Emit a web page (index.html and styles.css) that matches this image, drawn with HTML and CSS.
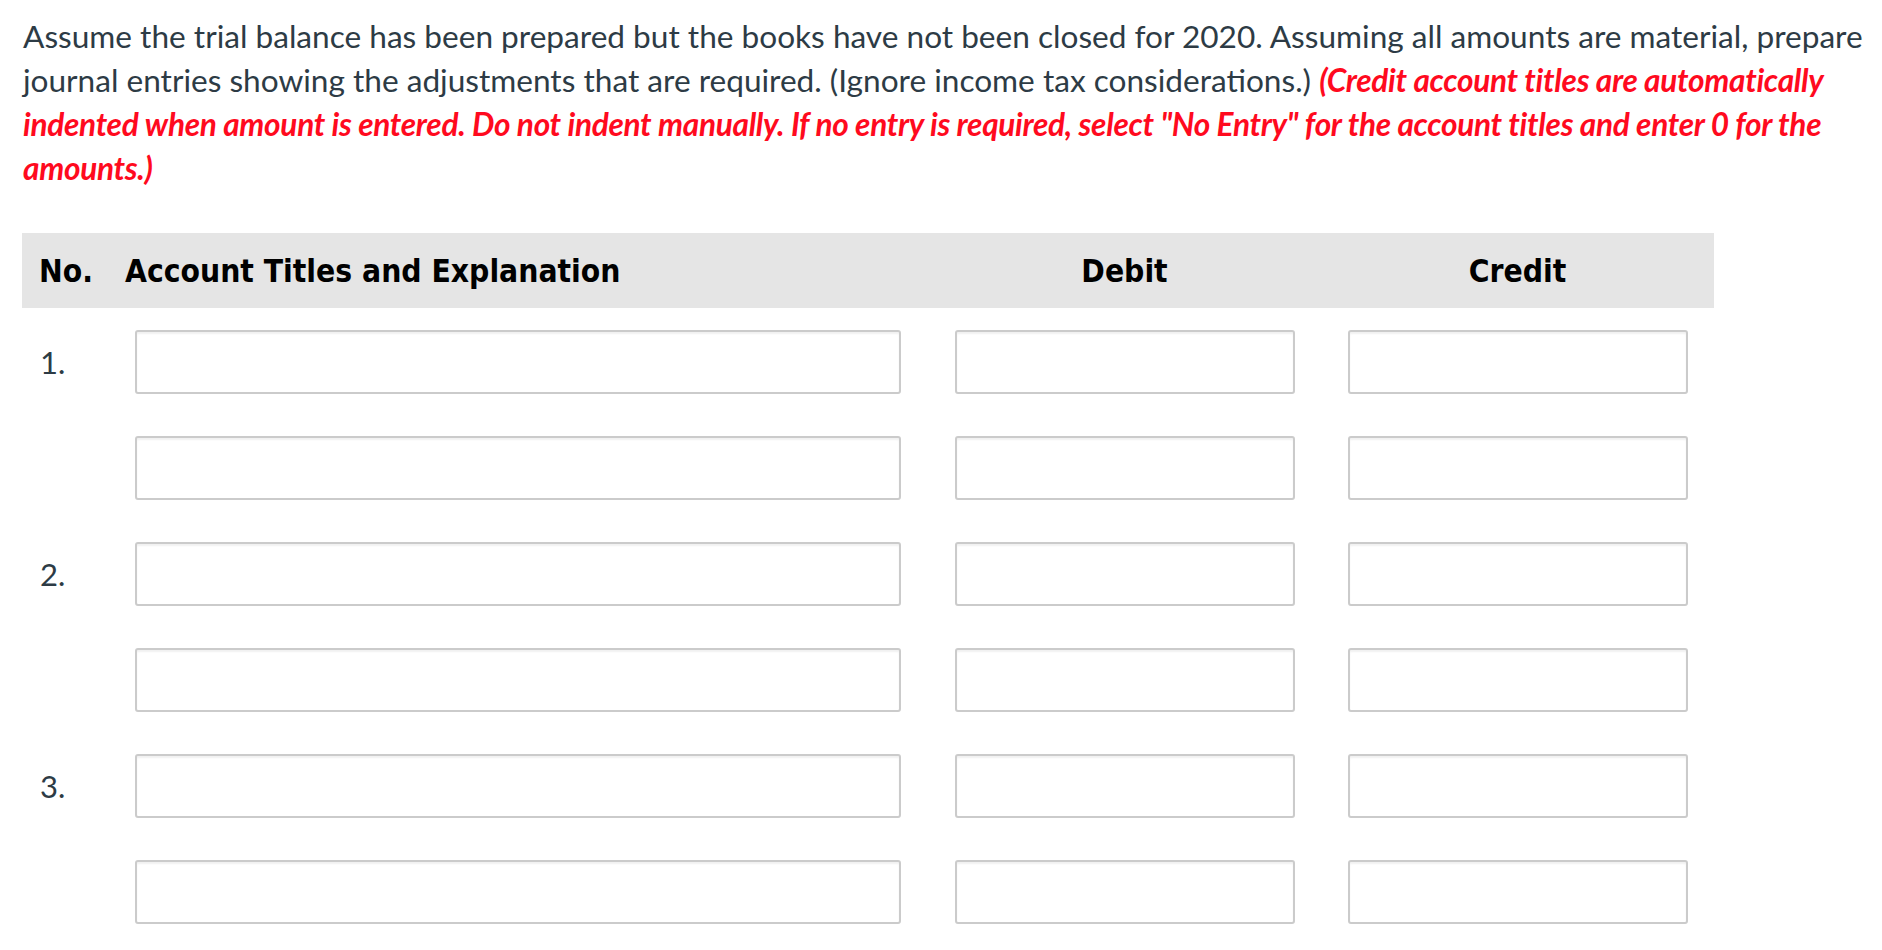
FILE: index.html
```html
<!DOCTYPE html>
<html lang="en">
<head>
<meta charset="utf-8">
<title>Journal entries</title>
<link rel="stylesheet" href="styles.css">
</head>
<body>
<div class="page">
  <p class="question">Assume the trial balance has been prepared but the books have not been closed for 2020. Assuming all amounts are material, prepare journal entries showing the adjustments that are required. (Ignore income tax considerations.) <em class="note">(Credit account titles are automatically indented when amount is entered. Do not indent manually. If no entry is required, select "No Entry" for the account titles and enter 0 for the amounts.)</em></p>

  <div class="journal">
    <div class="head">
      <div class="h-no">No.</div>
      <div class="h-acct">Account Titles and Explanation</div>
      <div class="h-amt">Debit</div>
      <div class="h-amt">Credit</div>
    </div>

    <div class="row">
      <div class="no">1.</div>
      <div class="cell-acct"><input class="field acct" type="text"></div>
      <div class="cell-amt"><input class="field amt" type="text"></div>
      <div class="cell-amt"><input class="field amt" type="text"></div>
    </div>
    <div class="row">
      <div class="no"></div>
      <div class="cell-acct"><input class="field acct" type="text"></div>
      <div class="cell-amt"><input class="field amt" type="text"></div>
      <div class="cell-amt"><input class="field amt" type="text"></div>
    </div>
    <div class="row">
      <div class="no">2.</div>
      <div class="cell-acct"><input class="field acct" type="text"></div>
      <div class="cell-amt"><input class="field amt" type="text"></div>
      <div class="cell-amt"><input class="field amt" type="text"></div>
    </div>
    <div class="row">
      <div class="no"></div>
      <div class="cell-acct"><input class="field acct" type="text"></div>
      <div class="cell-amt"><input class="field amt" type="text"></div>
      <div class="cell-amt"><input class="field amt" type="text"></div>
    </div>
    <div class="row">
      <div class="no">3.</div>
      <div class="cell-acct"><input class="field acct" type="text"></div>
      <div class="cell-amt"><input class="field amt" type="text"></div>
      <div class="cell-amt"><input class="field amt" type="text"></div>
    </div>
    <div class="row">
      <div class="no"></div>
      <div class="cell-acct"><input class="field acct" type="text"></div>
      <div class="cell-amt"><input class="field amt" type="text"></div>
      <div class="cell-amt"><input class="field amt" type="text"></div>
    </div>
  </div>
</div>
</body>
</html>
```
FILE: styles.css
```css
html, body {
  margin: 0;
  padding: 0;
  background: #ffffff;
}

.page {
  padding: 14px 0 0 22px;
  width: 1882px;
  box-sizing: border-box;
}

.question {
  width: 1852px;
  margin: 0 0 43px 1px;
  font-family: Lato, "Liberation Sans", sans-serif;
  font-size: 31.6px;
  line-height: 44px;
  color: #2d3b45;
}

.note {
  font-style: italic;
  font-weight: 700;
  color: #ff0a1e;
  letter-spacing: -0.3px;
}

.journal {
  width: 1692px;
}

.head,
.row {
  display: grid;
  grid-template-columns: 103px 803px 393px 393px;
  align-items: center;
}

.head {
  height: 75px;
  background: #e5e5e5;
  font-family: "DejaVu Sans Condensed", "DejaVu Sans", sans-serif;
  font-weight: 700;
  font-size: 31.5px;
  color: #000000;
}

.h-no {
  padding-left: 17px;
}

.h-amt {
  text-align: center;
}

.row {
  padding: 22px 0 20px;
}

.no {
  padding-left: 18px;
  font-family: Lato, "Liberation Sans", sans-serif;
  font-size: 31px;
  color: #2d3b45;
}

.cell-acct {
  padding-left: 10px;
}

.cell-amt {
  display: flex;
  justify-content: center;
}

.field {
  display: block;
  box-sizing: border-box;
  height: 64px;
  margin: 0;
  padding: 0 12px;
  border: 2px solid #cbcbcb;
  border-radius: 3px;
  background: #ffffff;
  box-shadow: inset 0 2px 2px rgba(0, 0, 0, 0.06);
  font-family: Lato, sans-serif;
  font-size: 24px;
  outline: none;
}

.acct {
  width: 766px;
}

.amt {
  width: 340px;
}
```
